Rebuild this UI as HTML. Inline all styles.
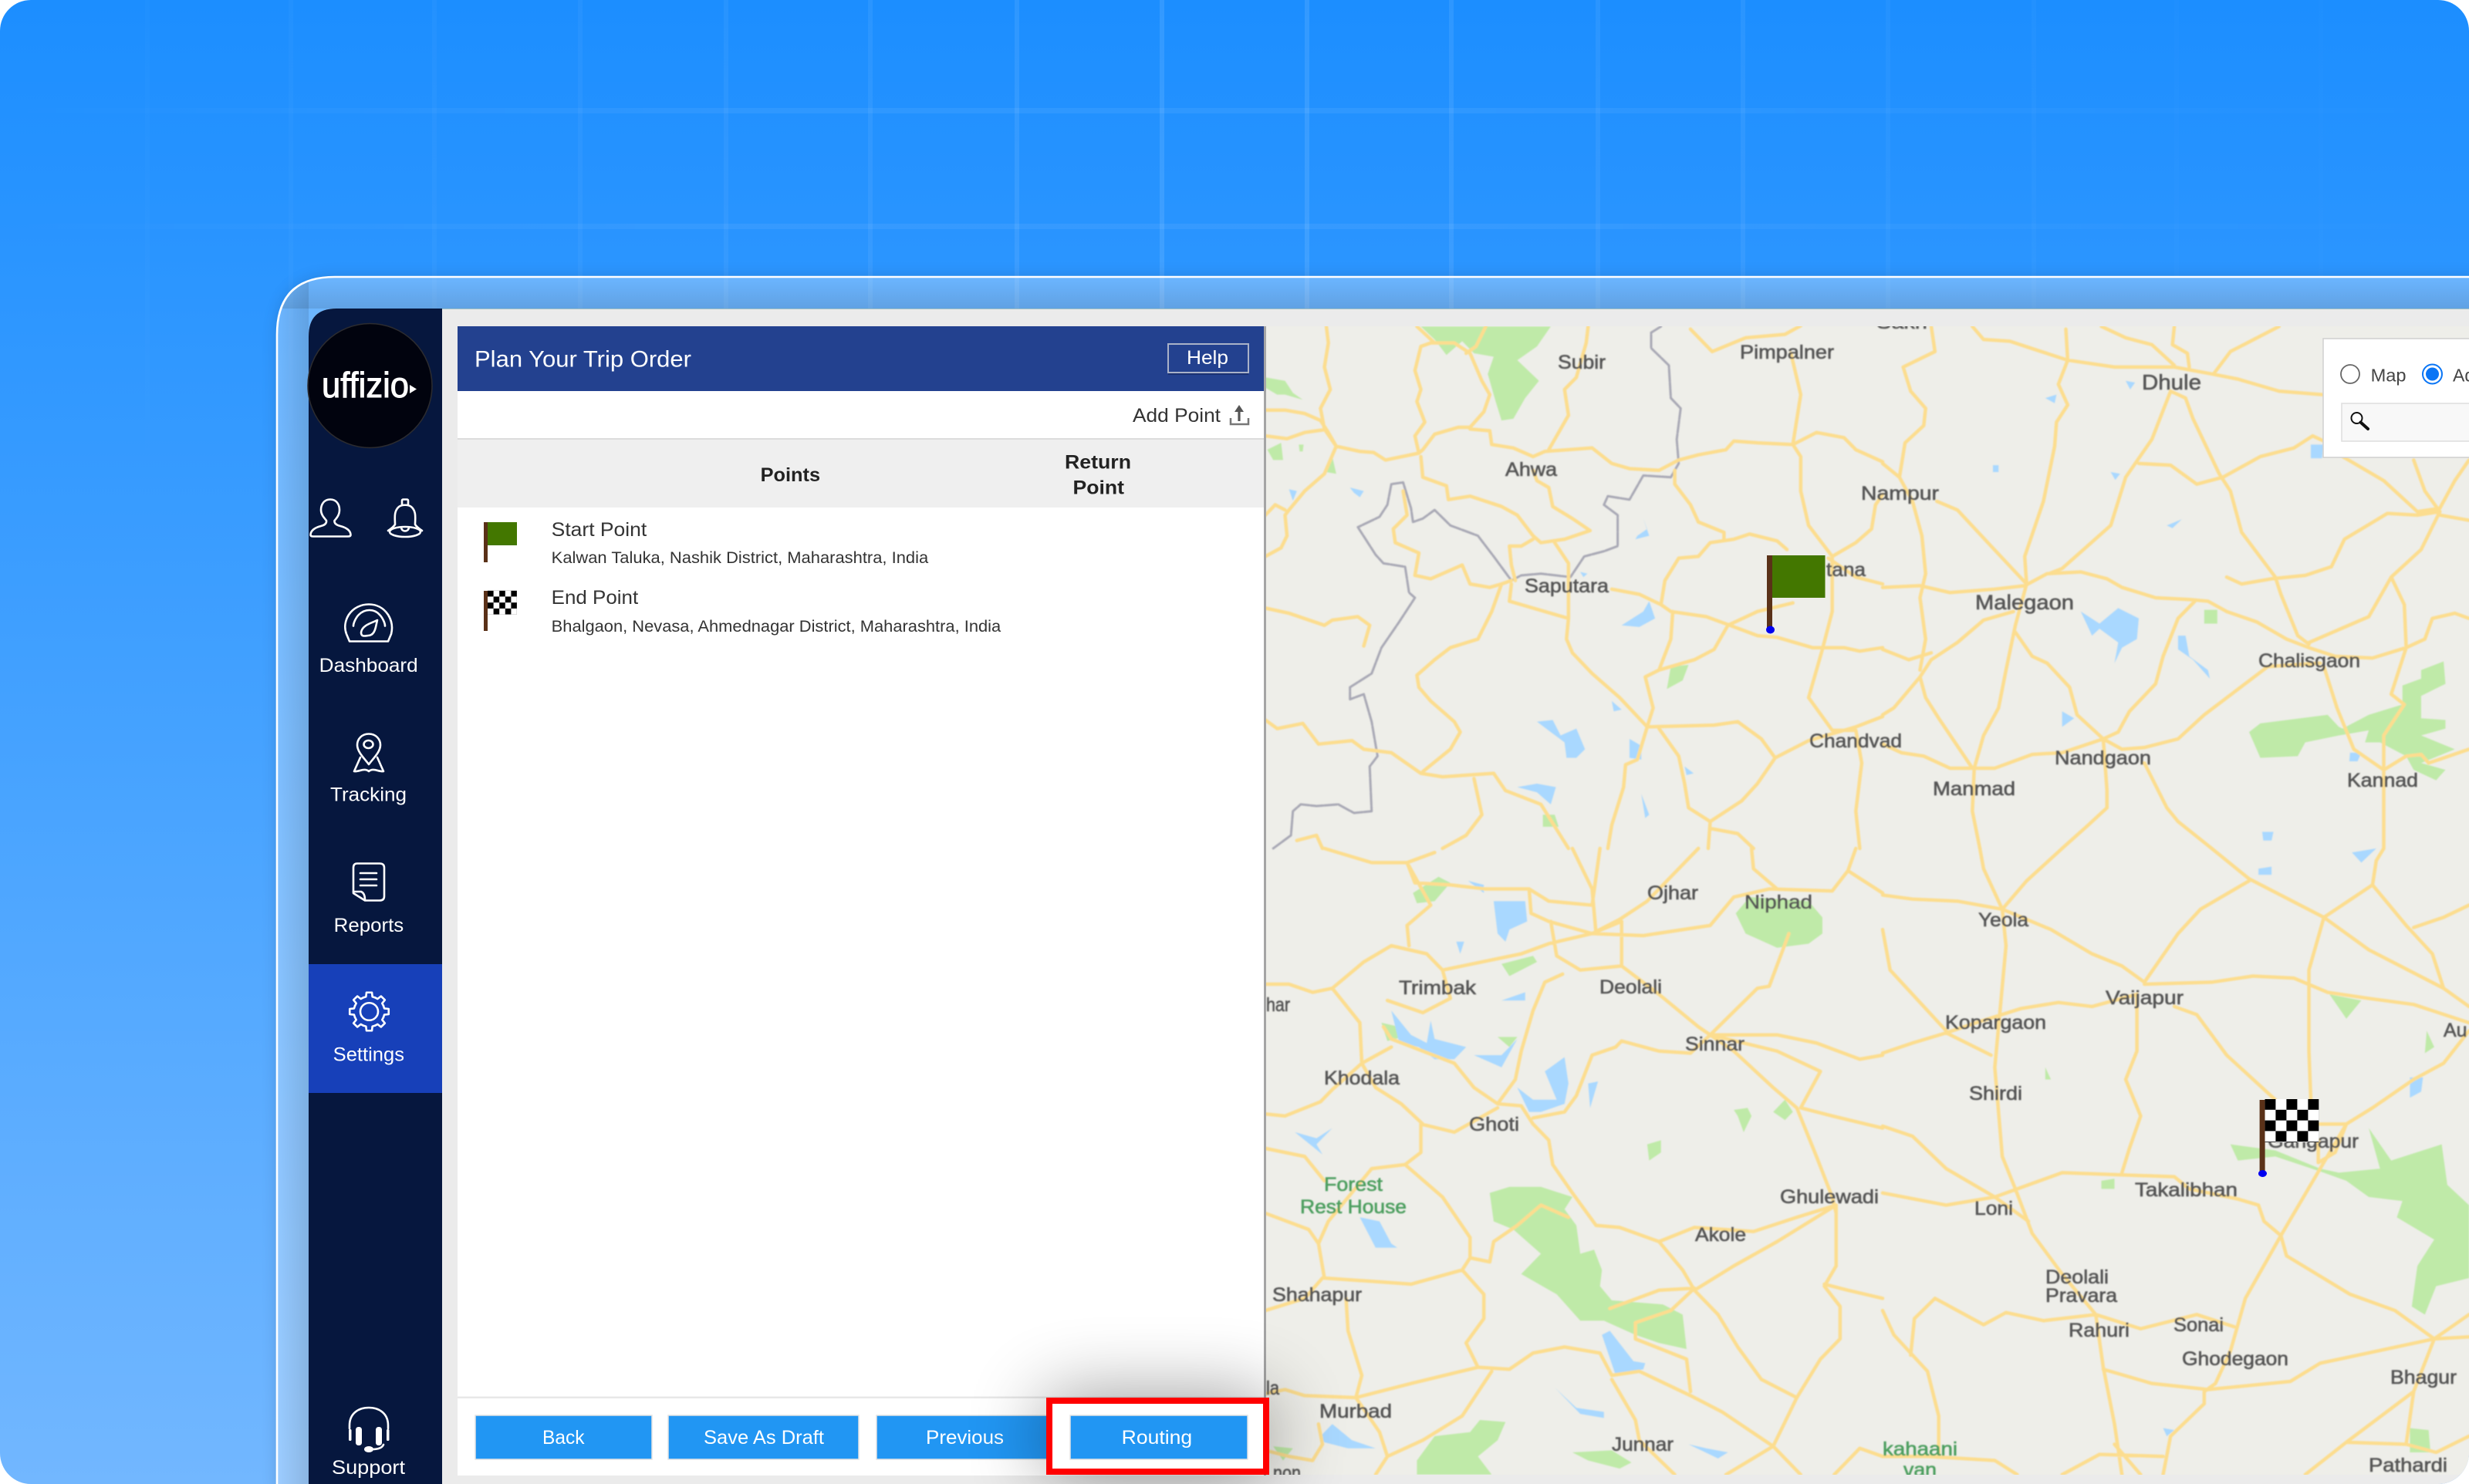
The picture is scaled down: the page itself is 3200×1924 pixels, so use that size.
<!DOCTYPE html>
<html lang="en"><head><meta charset="utf-8"><title>Plan Your Trip Order</title>
<style>
html,body{margin:0;padding:0;background:#fff;width:3200px;height:1924px;overflow:hidden}
svg{display:block}
text{font-family:"Liberation Sans",sans-serif}
.r,.b{fill:none;vector-effect:non-scaling-stroke;stroke-linejoin:round;stroke-linecap:round}
.r{stroke:#fcdd8f;stroke-width:4.5}
.b{stroke:#a9a9b5;stroke-width:3;stroke-dasharray:16 2}
.g{fill:#bfeaa8}.w{fill:#a9d8ff}
.l text{fill:#555;font-size:25px;stroke:#555;stroke-width:.6}
.t{fill:#333;font-size:25px}
.s{fill:#333;font-size:21px}
.h{fill:#222;font-size:25px;font-weight:bold}
.bt{fill:#fff;font-size:25px}
.n{fill:#fff;font-size:25px}
.i{fill:none;stroke:#fff;stroke-width:2.6;stroke-linejoin:round;stroke-linecap:round}
</style></head><body>
<svg width="3200" height="1924" viewBox="0 0 3200 1924" xmlns="http://www.w3.org/2000/svg">
<defs>
<clipPath id="page"><rect width="3200" height="1924" rx="40"/></clipPath>
<clipPath id="mapc"><rect x="1641" y="423" width="1559" height="1489"/></clipPath>
<clipPath id="framec"><path d="M359 1934V434Q359 359 434 359H3210V1934Z"/></clipPath>
<linearGradient id="bg" gradientUnits="userSpaceOnUse" x1="0" y1="0" x2="0" y2="1924"><stop offset="0" stop-color="#1c8eff"/><stop offset=".52" stop-color="#47a3ff"/><stop offset="1" stop-color="#72b7ff"/></linearGradient>
<linearGradient id="vf" x1="0" y1="0" x2="0" y2="1"><stop offset="0" stop-color="#fff"/><stop offset=".65" stop-color="#fff"/><stop offset="1" stop-color="#fff" stop-opacity="0"/></linearGradient>
<linearGradient id="hf" x1="0" y1="0" x2="1" y2="0"><stop offset="0" stop-color="#fff" stop-opacity="0"/><stop offset=".3" stop-color="#fff" stop-opacity=".06"/><stop offset=".6" stop-color="#fff" stop-opacity=".06"/><stop offset="1" stop-color="#fff" stop-opacity="0"/></linearGradient>
<linearGradient id="st" x1="0" y1="0" x2="0" y2="1"><stop offset="0" stop-color="#000" stop-opacity="0"/><stop offset="1" stop-color="#000" stop-opacity=".11"/></linearGradient>
<linearGradient id="sl" x1="0" y1="0" x2="1" y2="0"><stop offset="0" stop-color="#000" stop-opacity="0"/><stop offset="1" stop-color="#000" stop-opacity=".11"/></linearGradient>
<filter id="b1" filterUnits="userSpaceOnUse" x="1641" y="423" width="1559" height="1489"><feGaussianBlur stdDeviation=".8"/></filter>
<filter id="sh" filterUnits="userSpaceOnUse" x="1000" y="1500" width="1000" height="424"><feGaussianBlur stdDeviation="50"/></filter>
<filter id="fs" filterUnits="userSpaceOnUse" x="300" y="300" width="2900" height="1624"><feGaussianBlur stdDeviation="10"/></filter>
<pattern id="c1" patternUnits="userSpaceOnUse" x="632" y="765.7" width="15.2" height="15.5"><rect width="15.2" height="15.5" fill="#fff"/><rect width="7.6" height="7.75" fill="#000"/><rect x="7.6" y="7.75" width="7.6" height="7.75" fill="#000"/></pattern>
<pattern id="c2" patternUnits="userSpaceOnUse" x="2935.4" y="1425" width="28" height="27.6"><rect width="28" height="27.6" fill="#fff"/><rect width="14" height="13.8" fill="#000"/><rect x="14" y="13.8" width="14" height="13.8" fill="#000"/></pattern>
<path id="tooth" d="M-7.65 -18.48L-4.16 -19.56L-3.55 -25.25L3.55 -25.25L4.16 -19.56L7.65 -18.48" class="i"/>
</defs>
<g clip-path="url(#page)">
<rect width="3200" height="1924" fill="url(#bg)"/>
<!-- grid -->
<g fill="url(#vf)">
<rect x="188" width="6" height="620" opacity=".015"/><rect x="374" width="6" height="620" opacity=".025"/><rect x="560" width="6" height="620" opacity=".03"/><rect x="749" width="6" height="620" opacity=".04"/><rect x="938" width="6" height="620" opacity=".05"/><rect x="1125" width="6" height="620" opacity=".06"/><rect x="1315" width="6" height="620" opacity=".08"/><rect x="1503" width="6" height="620" opacity=".1"/><rect x="1691" width="6" height="620" opacity=".1"/><rect x="1878" width="6" height="620" opacity=".08"/><rect x="2068" width="6" height="620" opacity=".06"/><rect x="2256" width="6" height="620" opacity=".06"/><rect x="2444" width="6" height="620" opacity=".035"/><rect x="2633" width="6" height="620" opacity=".025"/><rect x="2818" width="6" height="620" opacity=".012"/><rect x="3005" width="6" height="620" opacity=".008"/>
</g>
<rect x="0" y="140" width="3200" height="7" fill="url(#hf)"/>
<rect x="0" y="290" width="3200" height="7" fill="url(#hf)"/>
<!-- glass frame -->
<path d="M359 1934V434Q359 359 434 359H3210V1934Z" fill="#000" opacity=".14" filter="url(#fs)"/>
<g clip-path="url(#framec)">
<rect width="3200" height="1924" fill="url(#bg)"/>
<g fill="url(#vf)">
<rect x="374" width="6" height="620" opacity=".025"/><rect x="560" width="6" height="620" opacity=".03"/><rect x="749" width="6" height="620" opacity=".04"/><rect x="938" width="6" height="620" opacity=".05"/><rect x="1125" width="6" height="620" opacity=".06"/><rect x="1315" width="6" height="620" opacity=".08"/><rect x="1503" width="6" height="620" opacity=".1"/><rect x="1691" width="6" height="620" opacity=".1"/><rect x="1878" width="6" height="620" opacity=".08"/><rect x="2068" width="6" height="620" opacity=".06"/><rect x="2256" width="6" height="620" opacity=".06"/><rect x="2444" width="6" height="620" opacity=".035"/><rect x="2633" width="6" height="620" opacity=".025"/>
</g>
<rect width="3200" height="1924" fill="#fff" opacity=".3"/>
<rect x="359" y="360" width="2841" height="40" fill="url(#st)"/>
<rect x="360" y="360" width="40" height="1564" fill="url(#sl)"/>
</g>
<path d="M359 1934V434Q359 359 434 359H3210" fill="none" stroke="#fff" stroke-width="2.6"/>
<!-- app -->
<path d="M400 1924V436Q400 400 436 400H3200V1924Z" fill="#ebebeb"/>
<rect x="573" y="400" width="2627" height="1" fill="#9fbfc5"/>
<path d="M400 1924V436Q400 400 436 400H573V1924Z" fill="#06173e"/>
<rect x="400" y="1250" width="173" height="167" fill="#1740b9"/>
<circle cx="479.5" cy="500" r="80.5" fill="#01030e" stroke="#2c2c30" stroke-width="1.5"/>
<text x="417" y="515" font-size="46" fill="#fff" stroke="#fff" stroke-width="1" textLength="113" lengthAdjust="spacingAndGlyphs">uffizio</text>
<path d="M531 499L540 504.5L531 510Z" fill="#fff"/>
<!-- user -->
<path class="i" d="M428 647.5C420 647.5 416 654 416 661C416 668 421 672 423 675C423.5 679 420 681 416 682C408 684 402.5 688 402.5 693.5C402.5 695 404 695.5 406 695.5H451C453 695.5 454.5 695 454.5 693.5C454.5 688 449 684 441 682C437 681 433 679 433.5 675C436 672 440 668 440 661C440 654 436 647.5 428 647.5Z"/>
<!-- bell -->
<path class="i" d="M521 654V649Q521 647.5 523 647.5H527Q529 647.5 529 649V654M512 680C512 672 510 663 517 657C521 654 529 654 533 657C540 663 538 672 538 680C540 683 544 686 547 688M512 680C510 683 506 686 503 688"/>
<ellipse class="i" cx="525" cy="689.5" rx="20" ry="6.5"/>
<path class="i" d="M520 684C521 690 529 690 530 684"/>
<!-- dashboard -->
<path class="i" d="M453 831.5H503L507 822C509 814 508 805 503 797C497 788 488 783.5 478 783.5C468 783.5 458 788 452 797C447 805 446 814 449 822Z"/>
<path class="i" d="M458 811.5C458 808 461 801 465 797C473 789 485 789 492 797C496 801 499 808 499 811.5"/>
<path class="i" d="M489 804C484 807 469 810 468 820C468 826 473 824.5 477 824C484 824 486 817 487 813Z"/>
<text class="n" x="413.7" y="871" textLength="128" lengthAdjust="spacingAndGlyphs">Dashboard</text>
<!-- tracking -->
<path class="i" d="M478 951.5C469 951.5 463 958 463 966C463 975 473 984 478 991C483 984 493 975 493 966C493 958 487 951.5 478 951.5Z"/>
<ellipse class="i" cx="477.5" cy="965" rx="6" ry="5"/>
<path class="i" d="M467 982L459 1000C465 1001 472 995 478 1000C484 995 491 1001 497 1000L489 982"/>
<text class="n" x="428" y="1038.5" textLength="99" lengthAdjust="spacingAndGlyphs">Tracking</text>
<!-- reports -->
<path class="i" d="M463 1119.5H492Q498 1119.5 498 1125V1162Q498 1167.5 492 1167.5H473L458 1158V1125Q458 1119.5 463 1119.5Z"/>
<path class="i" d="M458 1156H468Q473 1158 473 1167"/>
<path class="i" d="M467 1132H488M467 1140H488M467 1148H488"/>
<text class="n" x="432.7" y="1208" textLength="90.5" lengthAdjust="spacingAndGlyphs">Reports</text>
<!-- settings -->
<g transform="translate(478.5 1311.5) scale(1 .98)">
<use href="#tooth"/><use href="#tooth" transform="rotate(45)"/><use href="#tooth" transform="rotate(90)"/><use href="#tooth" transform="rotate(135)"/><use href="#tooth" transform="rotate(180)"/><use href="#tooth" transform="rotate(225)"/><use href="#tooth" transform="rotate(270)"/><use href="#tooth" transform="rotate(315)"/>
<circle class="i" r="11.5"/>
</g>
<text class="n" x="431.7" y="1375.5" textLength="92.3" lengthAdjust="spacingAndGlyphs">Settings</text>
<!-- support -->
<path class="i" d="M453 1852V1848C453 1833 464 1825 478 1825C492 1825 503 1833 503 1848V1852"/>
<rect x="461" y="1850" width="8" height="24" rx="3.5" fill="#fff"/><rect x="487" y="1850" width="8" height="24" rx="3.5" fill="#fff"/>
<rect x="452" y="1853" width="3.5" height="15" rx="1.5" fill="#fff"/><rect x="501" y="1853" width="3.5" height="15" rx="1.5" fill="#fff"/>
<path class="i" d="M497 1873C495 1878 488 1879 482 1879"/><ellipse cx="478" cy="1879" rx="6" ry="4" fill="#fff"/>
<text class="n" x="430" y="1911" textLength="95" lengthAdjust="spacingAndGlyphs">Support</text>
<!-- map -->
<g clip-path="url(#mapc)">
<rect x="1641" y="423" width="1559" height="1489" fill="#eeeee9"/>
<g filter="url(#b1)">
<g transform="translate(1640 400) scale(.5102 .4464)">
<path class="g" d="M395 52L725 52 690 110 640 150 695 210 660 260 630 320 600 325 585 270 565 190 580 140 530 130 500 95 460 135 430 90ZM0 200L50 210 70 245 95 265 50 250 30 250 0 230ZM5 410L40 390 45 440 20 440ZM85 395L97 395 95 415 87 415ZM170 430L180 480 155 475ZM1030 1040L1075 1035 1060 1080 1020 1105ZM705 1470L735 1470 745 1505 705 1505Z"/>
<path class="w" d="M60 525L80 530 70 558ZM215 520L250 530 240 548 225 535ZM975 850L990 900 950 925 905 920 960 880ZM690 1200L730 1195 750 1240 790 1220 812 1280 790 1305 765 1305 760 1260 725 1230ZM925 1250L955 1270 955 1310 925 1305ZM880 1140L905 1165 885 1170ZM640 1390L690 1380 738 1390 725 1440 690 1405ZM955 1410L975 1470 965 1480ZM1065 1330L1088 1350 1070 1355ZM945 660L970 640 960 610 975 660 940 670ZM800 765L818 770 808 780Z"/>
<path class="b" d="M1005 52L980 70 980 115 1025 165 1030 260 1055 290 1045 380 1050 450 1030 490 960 485 925 555 870 545 860 570 895 600 895 690 860 705 810 720 775 780 700 770 650 775 625 790 580 720 540 660 470 630 430 585 400 610 375 620 370 580 350 505 320 510 310 570 290 605 235 635 280 715 300 740 355 750 365 825 380 840 340 910 295 985 270 1060 215 1100 215 1135 250 1120 270 1200 285 1300 265 1330 270 1460 225 1465 185 1440 130 1445 90 1440 70 1460 65 1530 20 1568"/>
<path class="r" d="M155 52L160 100 150 170 165 235 140 290 150 350 180 400 240 415 275 418 305 440 390 420M0 295L50 295 100 305 140 325 160 360 180 400M0 370L55 378 100 360 150 352M180 400L150 480 100 530 60 585 50 600 55 660 40 695 0 720M0 600L25 570 50 585M390 420L380 370 405 330 385 270 395 235 380 180 395 110 420 100 480 100 520 130 550 210 570 250 555 300 520 345 490 345 430 365 400 410 390 420M385 52L430 100M560 52L535 110 510 130M820 52L815 100 790 200 760 235 770 310 745 360 720 410M520 350L570 355 575 395 630 405 680 430 710 415 830 405 880 450 925 465 1000 470 1050 440 1100 425 1170 410 1190 385 1250 390 1340 395 1400 360 1470 375 1500 410 1568 445M395 430L400 490 460 515 465 555 520 545 600 575 640 600 680 660 700 680 760 670 825 645 780 610 730 575 720 520 690 500 680 470M680 670L650 690 620 690 625 745 635 790M735 680L770 740 770 780 770 900 765 960 780 1000 830 1060 900 1130 970 1215M350 530L360 600 325 640 330 680 390 710 380 775 420 785 500 745 520 800 570 810 600 800 625 790M600 800L575 880 540 960 470 985 430 1020 385 1065 390 1100 420 1140 480 1200 495 1230 470 1280 400 1345M625 800L620 850 680 870 770 900M880 815L950 830 1005 860 1030 880 1120 895 1180 920 1250 950 1300 955 1390 985 1470 985 1510 995 1568 985M1005 860L1015 790 1050 725 1100 720 1130 680 1190 670 1230 655 1300 675 1325 700M1040 470L1040 510 1080 570 1100 620 1165 650 1165 670M1035 880L1030 960 1000 1050M965 1070L1000 1050 1090 1020 1140 990 1175 920 1250 880 1340 855M965 1070L985 1160 970 1215M970 1215L1140 1210 1200 1200 1260 1250 1295 1305 1250 1380 1210 1430 1130 1490 1075 1450 1065 1380 1050 1300 1000 1220M970 1215L945 1310 915 1325 910 1390 880 1500 870 1568M1340 395L1360 430 1360 530 1380 630 1440 720 1440 880 1415 990 1380 1130 1440 1225 1500 1225M1295 1305L1380 1255 1500 1215 1568 1185M1440 720L1500 680 1540 640 1550 570 1568 540M1430 725L1500 780 1568 800M1080 60L1135 125 1220 85 1320 75 1360 50M1335 130L1360 250 1340 395M1130 1490L1125 1568M1130 1510L1200 1525 1240 1568M1500 1225L1515 1320 1500 1460 1510 1568M0 870L60 885 150 920 170 905 235 895 265 920 250 980M0 1195L30 1220 95 1205 135 1265 220 1255 250 1280 320 1290 395 1350 450 1360 580 1350 610 1400 700 1440 770 1568M530 1365L550 1470 510 1530 450 1568M80 1545L130 1530 145 1568"/>
</g>
<g transform="translate(2440 400) scale(.4847 .4464)">
<path class="g" d="M860 875H895V915H860ZM980 1230L1010 1205 1190 1180 1220 1215 1230 1220 1300 1180 1390 1150 1390 1095 1440 1075 1440 1050 1500 1025 1505 1090 1440 1125 1440 1190 1505 1195 1505 1220 1440 1240 1530 1280 1440 1320 1505 1340 1480 1370 1420 1340 1400 1300 1330 1260 1290 1260 1300 1225 1220 1240 1130 1260 1110 1300 1010 1305Z"/>
<path class="w" d="M530 880L580 915 630 870 685 900 680 960 640 985 620 1030 630 970 580 930 560 950ZM650 210L675 215 662 235ZM1145 395L1180 395 1175 435 1145 435ZM435 260L465 250 460 275ZM610 475L635 480 622 498ZM295 455L310 455 310 475 295 475ZM480 1170L512 1190 480 1215ZM1250 1290L1280 1290 1270 1315 1248 1315ZM1015 1520L1045 1520 1040 1545 1018 1545ZM760 630L800 612 775 638ZM790 950L810 950 820 1010 870 1050 875 1075 830 1020 790 990Z"/>
<path class="r" d="M240 52L270 90 340 95 410 120 495 150 620 170 780 170 880 190 950 205 1060 240 1175 250M490 60L495 150 470 220 495 280 465 330 460 400 430 560 380 720 385 800M130 52L140 125 55 170 75 240 115 290 110 340 60 390 45 490 0 450M45 490L80 560 105 660 115 770 100 840 115 960 100 1050M145 560L200 585 290 690 385 800M0 810L100 805 180 825 300 815 380 805 440 770 530 765 600 785 640 810 730 840 820 845 870 850 920 880 1000 910 1080 960 1140 985 1210 1010 1310 1015 1400 985 1450 960 1470 900 1530 885 1568 900M385 800L355 920 330 1050 310 1160 270 1240 245 1335 240 1460 260 1568M355 940L400 1010 440 1030 500 1100 520 1180 590 1250M590 1250L640 1280 700 1275 790 1250 860 1180 1030 1040 1170 1030M350 880L270 905 200 970 130 1020 100 1070 30 1160 0 1180M0 990L70 1020 130 1000M100 1070L115 1130 150 1190 240 1335M0 1265L50 1290 110 1300 180 1335 300 1335 400 1295 480 1290 590 1250M590 1250L600 1400 600 1450 550 1500 480 1568M700 1320L760 1450 790 1490 880 1568M445 770L480 755 610 630 650 490 720 380 770 240M685 450L770 455 840 510 910 490 1010 430 1100 405 1150 370 1180 385M770 240L810 260 830 320 900 480 930 530 960 650 1050 780 1065 830 1110 950 1140 975M780 52L775 105 815 130 820 170M585 52L650 85 720 105 780 165M885 190L930 125 1060 52M920 780L960 800 1040 785 1130 775 1200 750 1235 670 1350 595 1430 600 1490 590 1440 700 1360 780 1300 895 1140 970M1360 780L1395 860 1400 985 1360 1120 1395 1150 1340 1240 1340 1568M1230 430L1340 500 1430 590 1490 580 1530 500 1568 440M1420 440L1450 530 1490 590M1490 600L1568 615M1180 1040L1215 1160 1260 1280 1340 1340 1400 1300 1440 1295 1460 1320 1568 1280M835 850L790 900 750 1010 730 1090 660 1170 630 1230 590 1250"/>
</g>
<g transform="translate(1640 1100) scale(.5102 .5255)">
<path class="g" d="M1195 160L1230 120 1380 130 1415 170 1415 210 1380 235 1300 245 1220 210ZM570 850L620 835 700 835 780 860 760 890 790 930 800 1000 835 990 855 1040 850 1080 880 1115 1010 1125 1060 1150 1070 1235 1000 1220 940 1200 860 1165 800 1165 740 1100 650 1050 700 1000 630 940 580 920ZM385 1510L430 1450 520 1440 545 1410 610 1415 590 1460 540 1500 575 1545 385 1545ZM780 1490L880 1485 905 1500 930 1515 900 1530 820 1510ZM295 430L340 440 350 465 310 475ZM590 465L640 465 620 490ZM600 285L680 265 690 280 620 315ZM375 110L440 70 470 85 430 130 385 135ZM1190 645L1225 640 1235 660 1215 700 1200 660ZM970 730L1005 720 1005 750 975 770ZM1290 650L1320 620 1340 650 1320 670ZM20 1475L70 1480 45 1510Z"/>
<path class="w" d="M320 400L370 460 410 480 420 425 430 470 510 490 480 520 430 520 390 490 340 480ZM580 130L660 130 665 180 620 200 610 230 590 210ZM530 510L600 510 640 470 600 540ZM710 550L760 515 770 580 760 630 700 650 670 650 640 590 680 620 740 620ZM600 375L660 355 660 375ZM240 910L290 920 320 975 335 985 280 985ZM855 1200L875 1190 935 1265 965 1270 960 1285 890 1300ZM140 1450L170 1420 220 1460 280 1480 210 1480 150 1465ZM75 700L130 715 170 690 130 730 145 755ZM735 1330L790 1380 860 1390 860 1405 800 1395ZM1075 1470L1120 1480 1175 1490 1150 1505ZM820 580L845 575 825 640ZM515 80L555 90 555 110ZM485 230L505 230 495 260Z"/>
<path class="r" d="M150 0L270 35 360 35 430 10M360 35L380 85 470 90 560 100 670 100 720 130 830 140 850 0M670 100L675 160 720 180 830 210 905 180M780 0L830 100 840 210M1100 0L1040 60 970 130 900 175 830 210M830 210L960 215 1130 190 1190 120 1280 100 1440 105 1480 55 1500 0M1235 0L1240 50 1300 100M1480 55L1568 110M830 210L720 235 650 260 450 300 410 260 320 240 250 280 170 345 120 355 60 335 0 335M360 35L420 140 360 190 365 240M450 300L470 370 400 405 310 375M170 345L240 430 245 530 280 590 345 630 400 680M725 180L740 265 800 300 905 290 1000 360 1100 440 1190 500 1290 590 1350 640 1400 760 1440 860 1450 900M905 180L905 290M755 310L710 330 680 400 650 500 635 570 590 630M300 440L320 470 400 500 480 530 530 590 590 630 650 635 680 680 720 720 730 780 780 850 840 930 900 935 1000 970M680 665L760 650 790 610 830 510 890 490 905 475 1000 500 1080 505 1130 460 1300 460 1400 480 1510 520 1568 510M1130 460L1250 345 1280 340 1330 210M1130 460L1300 500 1410 550 1360 640 1440 660 1568 690M0 655L50 660 140 625 170 595 245 530 320 490M395 680L480 700 590 640M395 680L395 750 355 780 270 790 160 920 135 975 150 1060 300 1070 370 1075 500 1040M355 780L450 860 520 960 520 1010 500 1040 555 1100 555 1160 510 1220 540 1280 620 1285 680 1245 760 1230 850 1245 880 1300 950 1290 1080 1350 1160 1390 1290 1475 1360 1545M0 740L100 760 150 820M0 900L110 940 135 975M520 1010L570 1020 580 970 640 930 700 880 770 910M1000 970L1090 935 1240 945 1350 910 1450 880 1300 970 1190 1030 1090 1090M1000 970L1060 1040 1090 1090 1150 1150 1200 1230 1260 1310 1350 1355 1290 1475 1170 1545M875 1135L1000 1090 1090 1085 1030 1140 940 1170 940 1210 1070 1260 1080 1340M1450 880L1450 1030 1420 1080 1460 1130 1460 1210 1410 1260 1350 1355M1420 1075L1480 1090 1568 1110M540 1280L370 1320 230 1355 100 1350 50 1335 0 1345M205 1110L210 1190 245 1300 230 1355M230 1355L290 1440 310 1500 400 1460 500 1400 575 1290M880 1310L940 1410 950 1460 1040 1545M145 1060L100 1110 0 1140M0 1485L60 1500 120 1510 145 1470 135 1420M310 1500L280 1545M1445 1545L1510 1480 1568 1500"/>
</g>
<g transform="translate(2440 1100) scale(.4847 .5255)">
<path class="g" d="M1300 690L1360 770 1495 730 1510 830 1568 880 1568 1060 1480 1080 1450 1150 1415 1130 1430 1030 1475 965 1375 910 1390 870 1300 860 1240 820 1180 800 1050 760 950 770 930 730 1050 745 1170 790 1220 800 1330 790ZM1195 360L1280 375 1240 420ZM1455 450L1475 490 1450 505ZM435 540L450 570 435 570ZM585 820L620 815 620 840 585 840ZM1410 1430L1460 1435 1465 1490 1410 1490Z"/>
<path class="w" d="M1410 565L1445 565 1440 600 1410 615ZM1005 50L1040 45 1040 65 1005 65ZM1255 10L1320 0 1280 35ZM750 1430L780 1435 760 1450Z"/>
<path class="r" d="M260 0L270 50 320 150 385 80 480 0M0 115L80 125 200 130 320 150 450 200 560 260 640 290 700 330M320 150L330 240 320 340 300 540 320 760 355 840 400 950 480 1050 570 1150 590 1280 620 1420 640 1545M880 0L980 75 1180 170 1300 250 1500 345 1568 390M980 80L850 150 790 210 700 330M700 335L880 330 990 315 1100 320 1190 355 1300 370 1420 385 1568 430M1180 170L1140 300 1140 500 1145 620M1180 170L1310 90 1320 30 1340 0M1310 90L1400 190 1470 260 1500 345M1420 195L1500 170 1568 140M780 390L840 410 920 510 1050 620M0 505L80 480 170 455 290 510M0 200L20 300 60 340 170 450M170 455L250 430 370 395 470 380 560 390 680 360M680 360L680 500 650 570 690 660 660 740 640 800M0 685L80 710 170 790 300 860M0 850L170 880 300 860 420 820 480 800 780 810 820 840 950 865 1005 880 1020 920 1065 955M300 860L390 920M1065 955L1170 790 1240 680 1310 640 1420 570 1500 530 1568 450M1065 955L1080 1005 1250 1100 1370 1140 1475 1210 1568 1150M1065 955L970 1110 930 1240 890 1320 860 1340 860 1370 770 1450 750 1545M0 1140L30 1200 80 1250 120 1290 150 1400 150 1500M75 1250L85 1160 140 1110 270 1175 330 1145 430 1165 570 1150 690 1185 840 1150 940 1180M590 1285L720 1320 870 1335 1090 1315 1170 1270 1475 1210 1568 1205M1475 1210L1420 1340 1240 1465 1130 1545M1420 1340L1400 1470 1480 1490 1568 1450M1240 1465L1400 1470M480 1545L580 1495 750 1500M620 1470L690 1545M1145 620L1160 680 1240 680M1165 720L1165 775 1210 750 1240 680M0 1500L120 1500 300 1510 360 1545"/>
</g>
<g class="l">
<text x="2019" y="478" textLength="62" lengthAdjust="spacingAndGlyphs">Subir</text>
<text x="2255" y="465" textLength="122" lengthAdjust="spacingAndGlyphs">Pimpalner</text>
<text x="1951" y="617" textLength="67" lengthAdjust="spacingAndGlyphs">Ahwa</text>
<text x="1976" y="768" textLength="109" lengthAdjust="spacingAndGlyphs">Saputara</text>
<text x="2367" y="747" textLength="51" lengthAdjust="spacingAndGlyphs">tana</text>
<text x="2412" y="648" textLength="101" lengthAdjust="spacingAndGlyphs">Nampur</text>
<text x="2345" y="969" textLength="120" lengthAdjust="spacingAndGlyphs">Chandvad</text>
<text x="2432" y="426" textLength="66" lengthAdjust="spacingAndGlyphs">Sakri</text>
<text x="2776" y="505" textLength="77" lengthAdjust="spacingAndGlyphs" style="font-size:28px">Dhule</text>
<text x="2560" y="790" textLength="128" lengthAdjust="spacingAndGlyphs" style="font-size:27px">Malegaon</text>
<text x="2927" y="865" textLength="132" lengthAdjust="spacingAndGlyphs">Chalisgaon</text>
<text x="3042" y="1020" textLength="92" lengthAdjust="spacingAndGlyphs">Kannad</text>
<text x="2663" y="991" textLength="125" lengthAdjust="spacingAndGlyphs">Nandgaon</text>
<text x="2505" y="1031" textLength="107" lengthAdjust="spacingAndGlyphs">Manmad</text>
<text x="2135" y="1166" textLength="66" lengthAdjust="spacingAndGlyphs">Ojhar</text>
<text x="2261" y="1178" textLength="88" lengthAdjust="spacingAndGlyphs">Niphad</text>
<text x="1813" y="1289" textLength="100" lengthAdjust="spacingAndGlyphs">Trimbak</text>
<text x="2073" y="1288" textLength="81" lengthAdjust="spacingAndGlyphs">Deolali</text>
<text x="2184" y="1362" textLength="77" lengthAdjust="spacingAndGlyphs">Sinnar</text>
<text x="1641" y="1311" textLength="31" lengthAdjust="spacingAndGlyphs">har</text>
<text x="1716" y="1406" textLength="98" lengthAdjust="spacingAndGlyphs">Khodala</text>
<text x="1904" y="1466" textLength="65" lengthAdjust="spacingAndGlyphs">Ghoti</text>
<text x="2307" y="1560" textLength="128" lengthAdjust="spacingAndGlyphs">Ghulewadi</text>
<text x="2197" y="1609" textLength="66" lengthAdjust="spacingAndGlyphs">Akole</text>
<text x="1649" y="1687" textLength="116" lengthAdjust="spacingAndGlyphs">Shahapur</text>
<text x="1710" y="1838" textLength="94" lengthAdjust="spacingAndGlyphs">Murbad</text>
<text x="2089" y="1881" textLength="80" lengthAdjust="spacingAndGlyphs">Junnar</text>
<text x="1641" y="1808" textLength="17" lengthAdjust="spacingAndGlyphs">la</text>
<text x="1650" y="1918" textLength="36" lengthAdjust="spacingAndGlyphs">non</text>
<text x="2564" y="1201" textLength="65" lengthAdjust="spacingAndGlyphs">Yeola</text>
<text x="2729" y="1302" textLength="101" lengthAdjust="spacingAndGlyphs">Vaijapur</text>
<text x="2521" y="1334" textLength="131" lengthAdjust="spacingAndGlyphs">Kopargaon</text>
<text x="2552" y="1426" textLength="69" lengthAdjust="spacingAndGlyphs">Shirdi</text>
<text x="2939" y="1488" textLength="118" lengthAdjust="spacingAndGlyphs">Gangapur</text>
<text x="2767" y="1551" textLength="133" lengthAdjust="spacingAndGlyphs">Takalibhan</text>
<text x="2559" y="1575" textLength="50" lengthAdjust="spacingAndGlyphs">Loni</text>
<text x="2651" y="1664" textLength="82" lengthAdjust="spacingAndGlyphs">Deolali</text>
<text x="2651" y="1688" textLength="93" lengthAdjust="spacingAndGlyphs">Pravara</text>
<text x="2681" y="1733" textLength="79" lengthAdjust="spacingAndGlyphs">Rahuri</text>
<text x="2817" y="1726" textLength="65" lengthAdjust="spacingAndGlyphs">Sonai</text>
<text x="2828" y="1770" textLength="138" lengthAdjust="spacingAndGlyphs">Ghodegaon</text>
<text x="3098" y="1794" textLength="86" lengthAdjust="spacingAndGlyphs">Bhagur</text>
<text x="3070" y="1908" textLength="102" lengthAdjust="spacingAndGlyphs">Pathardi</text>
<text x="3167" y="1344">Au</text>
<text x="1716" y="1544" textLength="76" lengthAdjust="spacingAndGlyphs" style="fill:#4c9e5e;stroke:#4c9e5e">Forest</text>
<text x="1685" y="1573" textLength="138" lengthAdjust="spacingAndGlyphs" style="fill:#4c9e5e;stroke:#4c9e5e">Rest House</text>
<text x="2440" y="1887" textLength="97" lengthAdjust="spacingAndGlyphs" style="fill:#4c9e5e;stroke:#4c9e5e">kahaani</text>
<text x="2467" y="1914" textLength="43" lengthAdjust="spacingAndGlyphs" style="fill:#4c9e5e;stroke:#4c9e5e">van</text>
</g>
</g>
<!-- map flags -->
<rect x="2290" y="720" width="7" height="97" fill="#5a3118"/>
<rect x="2297" y="720" width="68.5" height="55" fill="#437700"/>
<ellipse cx="2294.5" cy="816.5" rx="5.5" ry="5" fill="#0000f0"/>
<rect x="2928.6" y="1426" width="7" height="94" fill="#5a3118"/>
<rect x="2935.4" y="1425" width="70" height="56" fill="url(#c2)"/>
<ellipse cx="2932.5" cy="1521.5" rx="5.5" ry="4.5" fill="#0000f0"/>
<!-- map control -->
<rect x="3011" y="439" width="200" height="154" fill="#fff" stroke="#cfcfcf" stroke-width="1.5"/>
<circle cx="3046" cy="485" r="12" fill="#fff" stroke="#666" stroke-width="1.8"/>
<text x="3072.6" y="494.5" font-size="23" fill="#444" textLength="46" lengthAdjust="spacingAndGlyphs">Map</text>
<circle cx="3152.5" cy="485" r="12.5" fill="#fff" stroke="#0a75f5" stroke-width="2"/>
<circle cx="3152.5" cy="485" r="8.5" fill="#0a75f5"/>
<text x="3179" y="494.5" font-size="23" fill="#444">Ad</text>
<rect x="3035" y="523" width="180" height="49" fill="#f8f8f8" stroke="#dedede" stroke-width="1.5"/>
<circle cx="3054.5" cy="542" r="7" fill="#fff" stroke="#111" stroke-width="2"/>
<path d="M3059.5 547.5L3069 556" stroke="#111" stroke-width="4" stroke-linecap="round"/>
</g>
<!-- panel -->
<rect x="593" y="423" width="1045" height="1490" fill="#fff"/>
<rect x="1638" y="423" width="3" height="1490" fill="#a5a5a5"/>
<rect x="593" y="423" width="1045" height="84" fill="#23418f"/>
<text x="615" y="475.5" font-size="30" fill="#fff" textLength="281" lengthAdjust="spacingAndGlyphs">Plan Your Trip Order</text>
<rect x="1514" y="446" width="104" height="37" fill="none" stroke="#a9b2c8" stroke-width="2"/>
<rect x="1514" y="484" width="104" height="2" fill="#1b3273"/>
<text x="1538" y="472" font-size="25" fill="#fff" textLength="54" lengthAdjust="spacingAndGlyphs">Help</text>
<text class="t" x="1468" y="547" textLength="114" lengthAdjust="spacingAndGlyphs">Add Point</text>
<path d="M1606 546V531" stroke="#555" stroke-width="3.2"/><path d="M1600 534L1606 525L1612 534Z" fill="#555"/>
<path d="M1595 542V550H1618V542" fill="none" stroke="#777" stroke-width="2.5"/>
<rect x="593" y="568" width="1045" height="2.5" fill="#dcdcdc"/>
<rect x="593" y="570" width="1045" height="88" fill="#efefef"/>
<text class="h" x="985.6" y="624" textLength="77.5" lengthAdjust="spacingAndGlyphs">Points</text>
<text class="h" x="1380" y="607.5" textLength="86" lengthAdjust="spacingAndGlyphs">Return</text>
<text class="h" x="1390.5" y="640.5" textLength="66.5" lengthAdjust="spacingAndGlyphs">Point</text>
<rect x="627" y="677" width="5" height="52" fill="#5a3118"/><rect x="632" y="677" width="38" height="30" fill="#437700"/>
<text class="t" x="714.7" y="695" textLength="123.5" lengthAdjust="spacingAndGlyphs">Start Point</text>
<text class="s" x="714.7" y="730" textLength="488.5" lengthAdjust="spacingAndGlyphs">Kalwan Taluka, Nashik District, Maharashtra, India</text>
<rect x="627" y="766" width="5" height="52" fill="#5a3118"/><rect x="632" y="765.7" width="38" height="31" fill="url(#c1)"/>
<text class="t" x="714.7" y="783" textLength="112.5" lengthAdjust="spacingAndGlyphs">End Point</text>
<text class="s" x="714.7" y="819" textLength="582.5" lengthAdjust="spacingAndGlyphs">Bhalgaon, Nevasa, Ahmednagar District, Maharashtra, India</text>
<rect x="593" y="1810.5" width="1045" height="2.5" fill="#e8e8e8"/>
<g fill="#2196f3" stroke="#e4e4e4" stroke-width="1.5">
<rect x="616" y="1835" width="229" height="57"/><rect x="866" y="1835" width="247" height="57"/><rect x="1136" y="1835" width="250" height="57"/>
</g>
<text class="bt" x="703" y="1872" textLength="54.5" lengthAdjust="spacingAndGlyphs">Back</text>
<text class="bt" x="912" y="1872" textLength="156" lengthAdjust="spacingAndGlyphs">Save As Draft</text>
<text class="bt" x="1200" y="1872" textLength="101" lengthAdjust="spacingAndGlyphs">Previous</text>
<!-- highlight -->
<rect x="1356" y="1812" width="289" height="100" fill="#000" opacity=".42" filter="url(#sh)"/>
<rect x="1360" y="1816" width="281" height="92" fill="#fff" stroke="#f00" stroke-width="8"/>
<rect x="1387" y="1835" width="230" height="57" fill="#2196f3" stroke="#e4e4e4" stroke-width="1.5"/>
<text class="bt" x="1453.7" y="1872" textLength="91.5" lengthAdjust="spacingAndGlyphs">Routing</text>
</g>
</svg>
</body></html>
